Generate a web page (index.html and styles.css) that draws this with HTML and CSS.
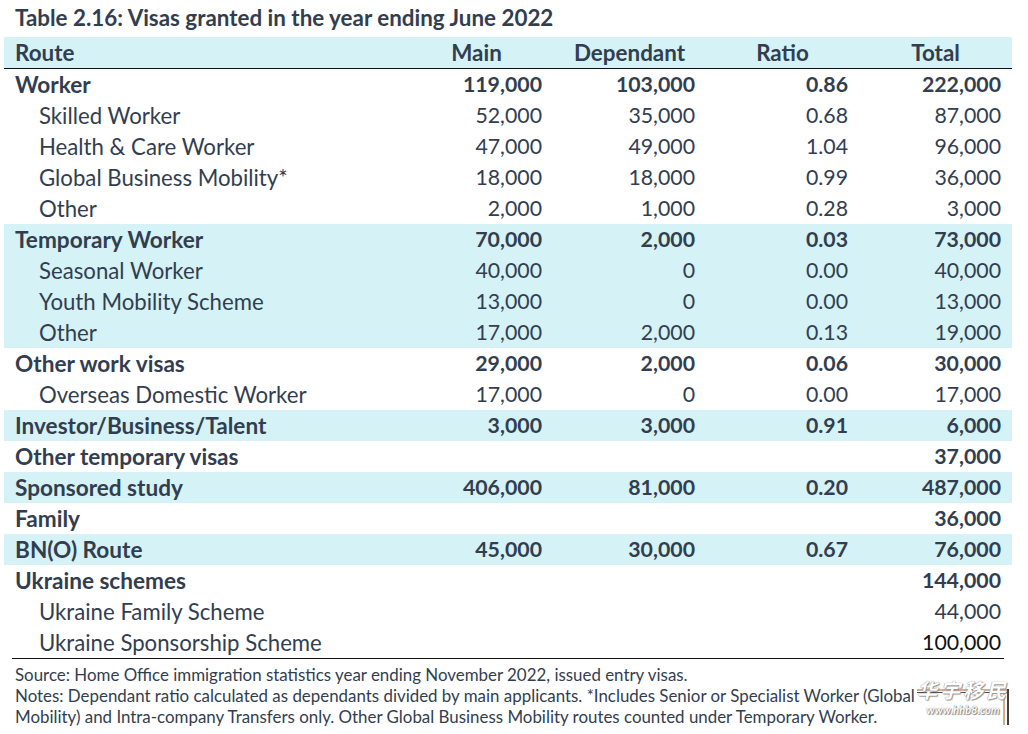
FILE: index.html
```html
<!DOCTYPE html>
<html lang="en">
<head>
<meta charset="utf-8">
<title>Table 2.16</title>
<link rel="stylesheet" href="styles.css">
</head>
<body>
<div class="page">
  <h1 class="title">Table 2.16: Visas granted in the year ending June 2022</h1>
  <table class="visas">
    <colgroup>
      <col class="c-route"><col class="c-num"><col class="c-num"><col class="c-num"><col class="c-num">
    </colgroup>
    <thead>
      <tr><th class="route">Route</th><th>Main</th><th>Dependant</th><th>Ratio</th><th>Total</th></tr>
    </thead>
    <tbody>
      <tr class="grp"><td class="route">Worker</td><td>119,000</td><td>103,000</td><td>0.86</td><td>222,000</td></tr>
      <tr><td class="route sub">Skilled Worker</td><td>52,000</td><td>35,000</td><td>0.68</td><td>87,000</td></tr>
      <tr><td class="route sub">Health &amp; Care Worker</td><td>47,000</td><td>49,000</td><td>1.04</td><td>96,000</td></tr>
      <tr><td class="route sub">Global Business Mobility*</td><td>18,000</td><td>18,000</td><td>0.99</td><td>36,000</td></tr>
      <tr><td class="route sub">Other</td><td>2,000</td><td>1,000</td><td>0.28</td><td>3,000</td></tr>
      <tr class="grp shade"><td class="route">Temporary Worker</td><td>70,000</td><td>2,000</td><td>0.03</td><td>73,000</td></tr>
      <tr class="shade"><td class="route sub">Seasonal Worker</td><td>40,000</td><td>0</td><td>0.00</td><td>40,000</td></tr>
      <tr class="shade"><td class="route sub">Youth Mobility Scheme</td><td>13,000</td><td>0</td><td>0.00</td><td>13,000</td></tr>
      <tr class="shade"><td class="route sub">Other</td><td>17,000</td><td>2,000</td><td>0.13</td><td>19,000</td></tr>
      <tr class="grp"><td class="route">Other work visas</td><td>29,000</td><td>2,000</td><td>0.06</td><td>30,000</td></tr>
      <tr><td class="route sub">Overseas Domestic Worker</td><td>17,000</td><td>0</td><td>0.00</td><td>17,000</td></tr>
      <tr class="grp shade"><td class="route">Investor/Business/Talent</td><td>3,000</td><td>3,000</td><td>0.91</td><td>6,000</td></tr>
      <tr class="grp"><td class="route">Other temporary visas</td><td></td><td></td><td></td><td>37,000</td></tr>
      <tr class="grp shade"><td class="route">Sponsored study</td><td>406,000</td><td>81,000</td><td>0.20</td><td>487,000</td></tr>
      <tr class="grp"><td class="route">Family</td><td></td><td></td><td></td><td>36,000</td></tr>
      <tr class="grp shade"><td class="route">BN(O) Route</td><td>45,000</td><td>30,000</td><td>0.67</td><td>76,000</td></tr>
      <tr class="grp"><td class="route">Ukraine schemes</td><td></td><td></td><td></td><td>144,000</td></tr>
      <tr><td class="route sub">Ukraine Family Scheme</td><td></td><td></td><td></td><td>44,000</td></tr>
      <tr class="last"><td class="route sub">Ukraine Sponsorship Scheme</td><td></td><td></td><td></td><td>100,000</td></tr>
    </tbody>
  </table>
  <div class="notes">
    <p>Source: Home Office immigration statistics year ending November 2022, issued entry visas.</p>
    <p>Notes: Dependant ratio calculated as dependants divided by main applicants. *Includes Senior or Specialist Worker (Global</p>
    <p>Mobility) and Intra-company Transfers only. Other Global Business Mobility routes counted under Temporary Worker.</p>
    <div class="wm">
      <span class="wm-cn">华宇移民</span>
      <span class="wm-url">www.hhb8.com</span>
    </div>
  </div>
</div>
</body>
</html>
```

FILE: styles.css
```css
html, body {
  margin: 0;
  padding: 0;
  background: #ffffff;
}
body {
  font-family: Lato, "Liberation Sans", "Noto Sans CJK SC", sans-serif;
  color: #323e4f;
}
.page {
  width: 1028px;
  height: 734px;
  overflow: hidden;
}
.title {
  margin: 0;
  padding: 4px 0 0 15px;
  height: 37px;
  box-sizing: border-box;
  font-size: 22.4px;
  line-height: 28px;
  font-weight: 700;
  white-space: nowrap;
}
.visas {
  margin-left: 4px;
  width: 1008px;
  border-collapse: collapse;
  table-layout: fixed;
}
.c-route { width: 396px; }
.c-num { width: 153px; }
.visas th, .visas td {
  padding: 0 11px 0 0;
  height: 31px;
  font-size: 21.3px;
  line-height: 31px;
  white-space: nowrap;
  text-align: right;
}
.visas thead tr {
  background: #d5f2f7;
}
.visas thead th {
  font-weight: 700;
  font-size: 22.4px;
  text-align: center;
  padding: 0;
  border-bottom: 1px solid #111;
  height: 31px;
}
.visas thead th.route {
  text-align: left;
  padding-left: 11px;
}
.visas td.route {
  text-align: left;
  padding-left: 11px;
  font-size: 22.2px;
}
.visas tr.grp td.route {
  font-size: 22.6px;
}
.visas td.sub {
  padding-left: 35px;
}
.visas tr.grp td {
  font-weight: 700;
}
.visas tr.shade {
  background: #d5f2f7;
}
.visas tr.last td:last-child {
  color: #111;
}
.notes {
  position: relative;
  margin-left: 12px;
  width: 992px;
  border-top: 1px solid #111;
  padding: 5px 0 0 3px;
  box-sizing: border-box;
}
.notes p {
  margin: 0;
  font-size: 16.9px;
  line-height: 21px;
  white-space: nowrap;
}
.wm {
  position: absolute;
  left: 905px;
  top: 21px;
  width: 92px;
  height: 45px;
  display: flex;
  flex-direction: column;
  align-items: center;
}
.wm::before {
  content: "";
  position: absolute;
  left: 0;
  right: 0;
  top: 9px;
  height: 1px;
  border-top: 2px solid #d7ab8c;
  border-bottom: 1px solid #5a4a42;
}
.wm::after {
  content: "";
  position: absolute;
  right: 0;
  top: 9px;
  bottom: 0;
  width: 2px;
  border-left: 2px solid #d7ab8c;
  border-right: 2px solid #4a3f3a;
}
.wm-cn {
  position: relative;
  z-index: 1;
  font-size: 20px;
  line-height: 21px;
  font-weight: 700;
  color: #ffffff;
  letter-spacing: 3px;
  font-style: italic;
  text-shadow: 0 0 1px #666, 1px 1px 1px #999;
}
.wm-url {
  position: relative;
  z-index: 1;
  margin-top: 2px;
  font-size: 11px;
  line-height: 13px;
  font-weight: 700;
  font-style: italic;
  color: #ffffff;
  text-shadow: 0 0 1px #555, 1px 1px 1px #888;
}
```
